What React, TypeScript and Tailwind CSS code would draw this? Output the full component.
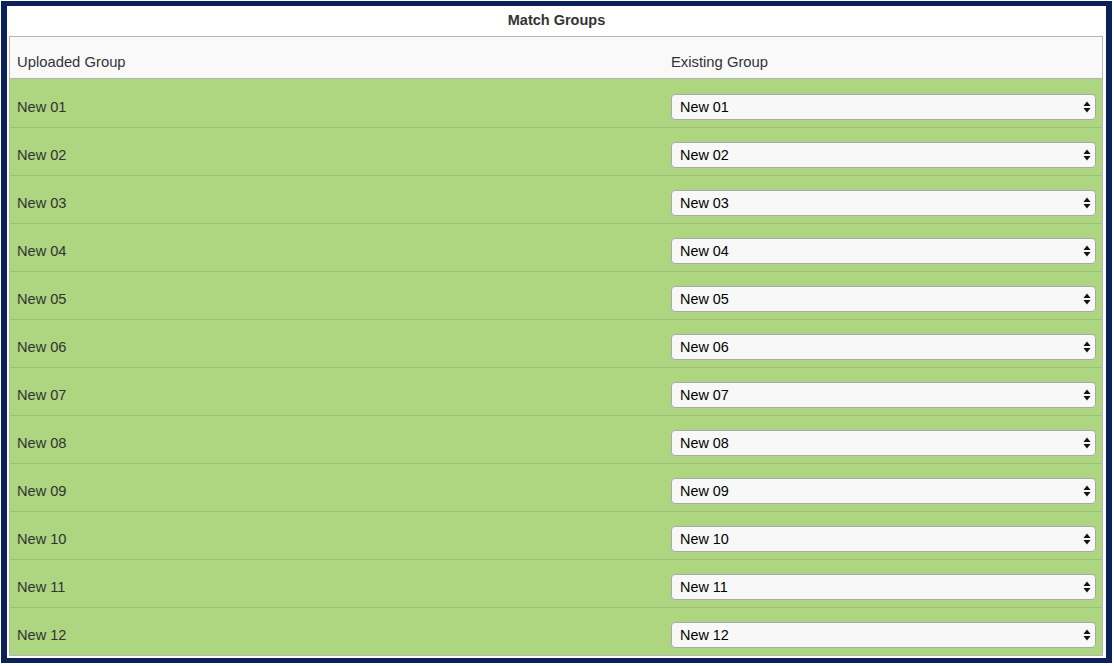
import { useState } from "react";

const groups = ["New 01", "New 02", "New 03", "New 04", "New 05", "New 06", "New 07", "New 08", "New 09", "New 10", "New 11", "New 12"];

function Arrows() {
    return (
        <svg width="8" height="12" viewBox="0 0 8 12" className="pointer-events-none absolute right-[5px] top-1/2 -translate-y-1/2">
            <path d="M4 0.5 L7.5 5 L0.5 5 Z" fill="#111" />
            <path d="M4 11.5 L7.5 7 L0.5 7 Z" fill="#111" />
        </svg>
    );
}

export default function App() {
    const [values, setValues] = useState<string[]>(groups);

    return (
        <div className="w-[1114px] h-[666px] bg-white pt-px pl-px font-['Liberation_Sans',Arial,sans-serif] text-[#333]">
            <div className="w-[1111px] h-[662px] border-x-[6px] border-y-[5px] border-[#0b2159] bg-white">
                {/* Title */}
                <div className="h-[30px] flex items-center justify-center text-[14.5px] font-bold text-[#333]">
                    Match Groups
                </div>

                {/* Table */}
                <div className="ml-[2px] w-[1094px] border border-[#b5b5b5]">
                    <div className="grid grid-cols-[653px_1fr] h-[42px] bg-[#f9f9f9] text-[14.8px] items-end pb-[5px] border-b border-[#b5b5b5]">
                        <div className="px-[7px]">Uploaded Group</div>
                        <div className="px-[8px]">Existing Group</div>
                    </div>
                    {groups.map((g, i) => (
                        <div
                            key={g}
                            className={`grid grid-cols-[653px_1fr] h-[48px] items-center pt-[7px] bg-[#aed580] text-[14.6px] ${i > 0 ? "border-t border-[#9dbf79]" : ""}`}
                        >
                            <div className="px-[7px] pt-[2px]">{g}</div>
                            <div className="pl-[8px] pr-[6px]">
                                <div className="relative">
                                    <select
                                        value={values[i]}
                                        onChange={(e) => setValues((v) => v.map((x, j) => (j === i ? e.target.value : x)))}
                                        className="appearance-none w-full h-[26px] rounded-[4px] border border-[#a9a9a9] bg-[#f8f8f8] pl-[8px] pt-[2px] text-[14.4px] text-black outline-none"
                                    >
                                        {groups.map((o) => (
                                            <option key={o} value={o}>{o}</option>
                                        ))}
                                    </select>
                                    <Arrows />
                                </div>
                            </div>
                        </div>
                    ))}
                </div>
            </div>
        </div>
    );
}
